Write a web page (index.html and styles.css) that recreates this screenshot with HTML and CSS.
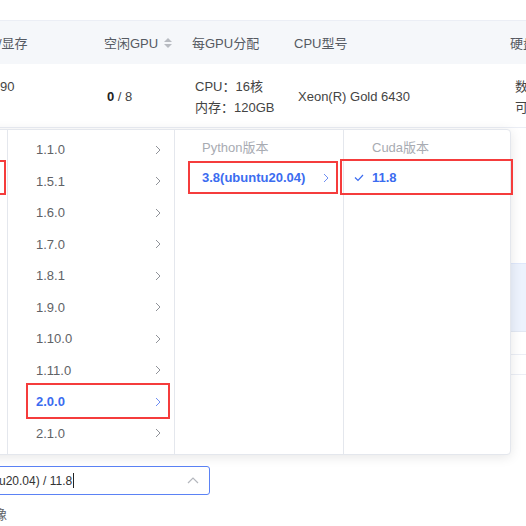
FILE: index.html
```html
<!DOCTYPE html>
<html lang="zh">
<head>
<meta charset="utf-8">
<link rel="stylesheet" href="styles.css">
</head>
<body>
<div class="page">
  <div class="table">
    <div class="thead">
      <div class="c c1"><span class="cut">/显存</span></div>
      <div class="c c2">空闲GPU
        <span class="sort"><i class="up"></i><i class="down"></i></span>
      </div>
      <div class="c c3">每GPU分配</div>
      <div class="c c4">CPU型号</div>
      <div class="c c5">硬盘</div>
    </div>
    <div class="trow">
      <div class="c c1 top">90</div>
      <div class="c c2 b"><span><strong>0</strong> / 8</span></div>
      <div class="c c3 b"><div>CPU：16核</div><div>内存：120GB</div></div>
      <div class="c c4 b x">Xeon(R) Gold 6430</div>
      <div class="c c5 b e"><div>数</div><div>可</div></div>
    </div>
    <div class="filler blank"></div>
    <div class="filler hl"></div>
    <div class="filler r1"></div>
    <div class="filler r2"></div>
  </div>

  <div class="form">
    <div class="input">
      <span class="val">u20.04) / 11.8</span><span class="caret"></span>
      <svg class="arrow-up" width="12" height="7" viewBox="0 0 12 7"><polyline points="1,6 6,1 11,6" fill="none" stroke="#b4b7bd" stroke-width="1.2"/></svg>
    </div>
    <div class="label">像</div>
  </div>

  <div class="cascader">
    <div class="col col1">
      <div class="head">框架</div>
      <div class="item mark m1">PyTorch</div>
    </div>
    <div class="col col2">
      <div class="item">1.1.0<svg class="chev" width="6" height="10" viewBox="0 0 6 10"><polyline points="1,1 5,5 1,9" fill="none" stroke="#909399" stroke-width="1"/></svg></div>
      <div class="item">1.5.1<svg class="chev" width="6" height="10" viewBox="0 0 6 10"><polyline points="1,1 5,5 1,9" fill="none" stroke="#909399" stroke-width="1"/></svg></div>
      <div class="item">1.6.0<svg class="chev" width="6" height="10" viewBox="0 0 6 10"><polyline points="1,1 5,5 1,9" fill="none" stroke="#909399" stroke-width="1"/></svg></div>
      <div class="item">1.7.0<svg class="chev" width="6" height="10" viewBox="0 0 6 10"><polyline points="1,1 5,5 1,9" fill="none" stroke="#909399" stroke-width="1"/></svg></div>
      <div class="item">1.8.1<svg class="chev" width="6" height="10" viewBox="0 0 6 10"><polyline points="1,1 5,5 1,9" fill="none" stroke="#909399" stroke-width="1"/></svg></div>
      <div class="item">1.9.0<svg class="chev" width="6" height="10" viewBox="0 0 6 10"><polyline points="1,1 5,5 1,9" fill="none" stroke="#909399" stroke-width="1"/></svg></div>
      <div class="item">1.10.0<svg class="chev" width="6" height="10" viewBox="0 0 6 10"><polyline points="1,1 5,5 1,9" fill="none" stroke="#909399" stroke-width="1"/></svg></div>
      <div class="item">1.11.0<svg class="chev" width="6" height="10" viewBox="0 0 6 10"><polyline points="1,1 5,5 1,9" fill="none" stroke="#909399" stroke-width="1"/></svg></div>
      <div class="item active mark m2">2.0.0<svg class="chev" width="6" height="10" viewBox="0 0 6 10"><polyline points="1,1 5,5 1,9" fill="none" stroke="#6f8ef2" stroke-width="1"/></svg></div>
      <div class="item">2.1.0<svg class="chev" width="6" height="10" viewBox="0 0 6 10"><polyline points="1,1 5,5 1,9" fill="none" stroke="#909399" stroke-width="1"/></svg></div>
    </div>
    <div class="col col3">
      <div class="head">Python版本</div>
      <div class="item active mark m3">3.8(ubuntu20.04)<svg class="chev" width="6" height="10" viewBox="0 0 6 10"><polyline points="1,1 5,5 1,9" fill="none" stroke="#6f8ef2" stroke-width="1"/></svg></div>
    </div>
    <div class="col col4">
      <div class="head">Cuda版本</div>
      <div class="item active mark m4"><svg class="check" width="10" height="8" viewBox="0 0 10 8"><polyline points="1,3.5 4,6.5 9,1" fill="none" stroke="#3b6cf0" stroke-width="1.2"/></svg>11.8</div>
    </div>
  </div>
</div>
</body>
</html>
```

FILE: styles.css
```css
* { box-sizing: border-box; }
html, body { margin: 0; padding: 0; background: #fff; }
.page {
  position: relative;
  width: 526px;
  height: 526px;
  overflow: hidden;
  font-family: "Liberation Sans", "Noto Sans CJK SC", sans-serif;
  font-size: 13px;
  color: #606266;
}

/* table */
.table { margin-top: 20px; border-top: 1px solid #ebeef5; }
.thead {
  display: flex;
  align-items: center;
  height: 43px;
  background: #f5f7fa;
  color: #555a62;
}
.trow {
  display: flex;
  align-items: center;
  height: 64px;
  border-bottom: 1px solid #ebeef5;
  color: #444;
}
.c { flex: none; white-space: nowrap; }
.c1 { width: 104px; }
.c2 { width: 88px; display: flex; align-items: center; }
.c3 { width: 102px; }
.c4 { width: 216px; }
.c5 { flex: 1; }
.cut { display: inline-block; margin-left: -2px; }
.trow .c { line-height: 21px; }
.trow .c1.top { align-self: flex-start; padding-top: 12px; }
.trow .b { padding-left: 3px; padding-top: 2px; }
.trow .x { padding-left: 4px; }
.trow .e { padding-left: 5px; }
.trow strong { color: #222; }
.sort { display: inline-flex; flex-direction: column; gap: 2px; margin-left: 6px; }
.sort i { display: block; width: 0; height: 0; border-left: 4px solid transparent; border-right: 4px solid transparent; }
.sort .up { border-bottom: 4px solid #b8bbc1; }
.sort .down { border-top: 4px solid #b8bbc1; }

.filler { border-bottom: 1px solid #ebeef5; }
.filler.blank { height: 135px; border-bottom: 0; }
.filler.hl { height: 69px; background: #ecf2fd; border-top: 1px solid #dfe8fb; border-bottom-color: #e2e8f3; }
.filler.r1 { height: 23px; }
.filler.r2 { height: 20px; }

/* form */
.form { margin-top: 91px; }
.input {
  display: flex;
  align-items: center;
  width: 225px;
  height: 29px;
  margin-left: -15px;
  padding-left: 13px;
  padding-right: 10px;
  border: 1px solid #5b82f5;
  border-radius: 3px;
  font-size: 12px;
  color: #333;
}
.caret { display: inline-block; width: 1px; height: 15px; background: #222; margin-left: 1px; }
.arrow-up { margin-left: auto; }
.label { margin-top: 12px; margin-left: -6px; line-height: 16px; color: #606266; }

/* cascader */
.cascader {
  position: absolute;
  top: 129px;
  left: -160px;
  width: 671px;
  height: 326px;
  display: flex;
  background: #fff;
  border: 1px solid #e4e7ed;
  border-radius: 4px;
  box-shadow: 0 2px 12px 0 rgba(0, 0, 0, 0.1);
}
.col { flex: none; padding-top: 4px; border-right: 1px solid #e4e7ed; }
.col1 { width: 167px; }
.col2 { width: 167px; }
.col3 { width: 169px; }
.col4 { width: 166px; border-right: 0; }
.item {
  position: relative;
  display: flex;
  align-items: center;
  justify-content: space-between;
  height: 31.5px;
  padding-left: 28px;
  padding-right: 13px;
  white-space: nowrap;
}
.col3 .item { padding-left: 27px; padding-right: 14px; }
.head { height: 28px; line-height: 28px; padding-left: 28px; color: #a8abb2; }
.col3 .head { padding-left: 27px; }
.item.active { color: #3b6cf0; font-weight: bold; }
.col4 .item { justify-content: flex-start; padding-left: 10px; }
.check { margin-right: 8px; margin-top: 1px; }
.mark::after {
  content: "";
  position: absolute;
  border: 2px solid #f53c3c;
}
.m1::after { left: 20px; right: 1px; top: -2px; bottom: -1px; }
.m2::after { left: 18px; right: 4px; top: -3px; bottom: -1px; }
.m3::after { left: 13px; right: 5px; top: -1px; bottom: 0; }
.m4::after { left: -4px; right: -3px; top: -3px; bottom: -1px; }
```
